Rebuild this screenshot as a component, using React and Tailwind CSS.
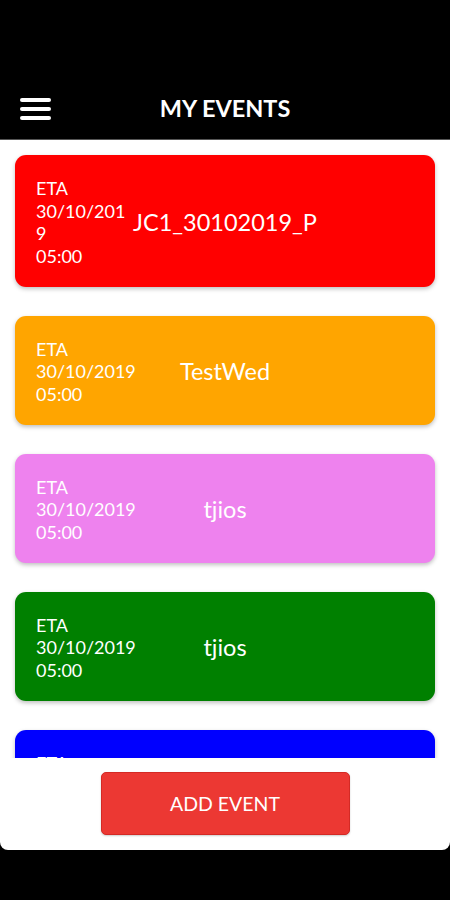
import React from "react";

const events = [
  { color: "bg-[#ff0000]", title: "JC1_30102019_P" },
  { color: "bg-[#ffa500]", title: "TestWed" },
  { color: "bg-[#ee82ee]", title: "tjios" },
  { color: "bg-[#008000]", title: "tjios" },
  { color: "bg-[#0000ff]", title: "tjios" },
];

function Card({ color, title }) {
  return (
    <div
      className={`${color} rounded-[11px] shadow-[0_2px_4px_rgba(0,0,0,0.25)] pl-[21px] pr-[21px] pt-[22px] pb-[20px] grid grid-cols-[1fr_auto_1fr] items-center text-white`}
    >
      <div className="text-[18px] leading-[22.5px] break-all">
        <div>ETA</div>
        <div>30/10/2019</div>
        <div>05:00</div>
      </div>
      <div className="text-[23.5px] leading-[28px] whitespace-nowrap">{title}</div>
      <div />
    </div>
  );
}

export default function App() {
  return (
    <div
      className="w-[450px] h-[900px] bg-black flex flex-col overflow-hidden"
      style={{ fontFamily: "Lato, 'Open Sans', sans-serif" }}
    >
      <div className="h-[80px] shrink-0" />
      <div className="h-[60px] shrink-0 flex items-center relative border-b border-[#555]">
        <div className="w-[31px] ml-[20px] flex flex-col gap-[5px] mt-[-2px]">
          <span className="block h-[4px] rounded-full bg-white" />
          <span className="block h-[4px] rounded-full bg-white" />
          <span className="block h-[4px] rounded-full bg-white" />
        </div>
        <div className="flex-1 text-center text-white font-bold text-[23.5px] mr-[51px] mt-[-1px]">
          MY EVENTS
        </div>
      </div>
      <div className="h-[710px] shrink-0 bg-white rounded-b-[8px] flex flex-col">
        <div className="h-[618px] overflow-hidden px-[15px] pt-[15px] flex flex-col gap-[28.5px]">
          {events.map((e, i) => (
            <div key={i} className="shrink-0">
              <Card {...e} />
            </div>
          ))}
        </div>
        <div className="flex justify-center pt-[14px]">
          <button className="w-[249px] h-[63px] bg-[#ec3833] border border-[#d42a25] rounded-[5px] text-white text-[19.5px] shadow-[0_1px_2px_rgba(0,0,0,0.2)]">
            ADD EVENT
          </button>
        </div>
      </div>
      <div className="flex-1" />
    </div>
  );
}
